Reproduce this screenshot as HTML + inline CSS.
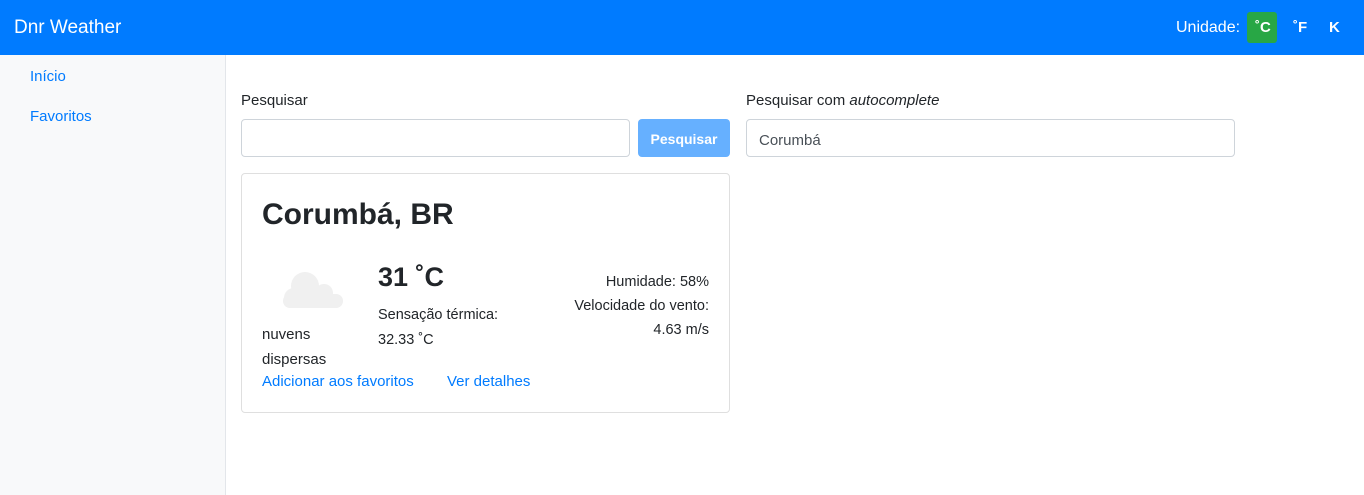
<!DOCTYPE html><html><head><meta charset="utf-8"><style>
*{box-sizing:border-box;margin:0;padding:0}
body{width:1364px;height:495px;overflow:hidden;font-family:"Liberation Sans",sans-serif;color:#212529;background:#fff;position:relative;font-size:15px}
.a{position:absolute;white-space:nowrap}
.nav{position:absolute;left:0;top:0;width:1364px;height:55px;background:#007bff}
.side{position:absolute;left:0;top:55px;width:226px;height:440px;background:#f8f9fa;border-right:1px solid #e3e6ea}
.lnk{color:#007bff}
.inp{position:absolute;border:1px solid #ced4da;border-radius:4px;height:38px;background:#fff}
</style></head><body>
<div class="nav"></div>
<div class="a" style="left:14px;top:17px;font-size:19px;color:#fff">Dnr Weather</div>
<div class="a" style="left:1176px;top:19px;color:#fff;font-size:16px">Unidade:</div>
<div class="a" style="left:1247px;top:12px;width:30px;height:31px;background:#28a745;border-radius:3px"></div>
<div class="a" style="left:1255px;top:19px;color:#fff;font-weight:bold;font-size:15px">˚C</div>
<div class="a" style="left:1293px;top:19px;color:#fff;font-weight:bold;font-size:15px">˚F</div>
<div class="a" style="left:1329px;top:19px;color:#fff;font-weight:bold;font-size:15px">K</div>
<div class="side"></div>
<div class="a lnk" style="left:30px;top:68px">Início</div>
<div class="a lnk" style="left:30px;top:108px">Favoritos</div>
<div class="a" style="left:241px;top:92px">Pesquisar</div>
<div class="inp" style="left:241px;top:119px;width:389px"></div>
<div class="a" style="left:638px;top:119px;width:92px;height:38px;background:#66b0ff;border-radius:4px;color:#fff;text-align:center;line-height:40px;font-weight:bold;font-size:14px">Pesquisar</div>
<div class="a" style="left:746px;top:92px">Pesquisar com <i>autocomplete</i></div>
<div class="inp" style="left:746px;top:119px;width:489px"></div>
<div class="a" style="left:759px;top:132px;color:#495057">Corumbá</div>
<div class="a" style="left:241px;top:173px;width:489px;height:240px;border:1px solid #dfdfdf;border-radius:4px"></div>
<div class="a" style="left:262px;top:198px;font-size:30px;font-weight:bold">Corumbá, BR</div>
<svg class="a" style="left:280px;top:268px" width="66" height="44" viewBox="0 0 66 44"><g fill="#f0f0f0"><circle cx="25" cy="18" r="14"/><circle cx="44" cy="25" r="9"/><circle cx="14" cy="30" r="10"/><rect x="3" y="26" width="60" height="14" rx="7"/></g></svg>
<div class="a" style="left:262px;top:322px;line-height:25px">nuvens<br>dispersas</div>
<div class="a" style="left:378px;top:262px;font-size:27px;font-weight:bold">31 ˚C</div>
<div class="a" style="left:378px;top:303px;line-height:25px;font-size:14.5px">Sensação térmica:<br>32.33 ˚C</div>
<div class="a" style="right:655px;top:270px;line-height:24px;text-align:right;font-size:14.5px">Humidade: 58%<br>Velocidade do vento:<br>4.63 m/s</div>
<div class="a lnk" style="left:262px;top:373px">Adicionar aos favoritos</div>
<div class="a lnk" style="left:447px;top:373px">Ver detalhes</div>
</body></html>
